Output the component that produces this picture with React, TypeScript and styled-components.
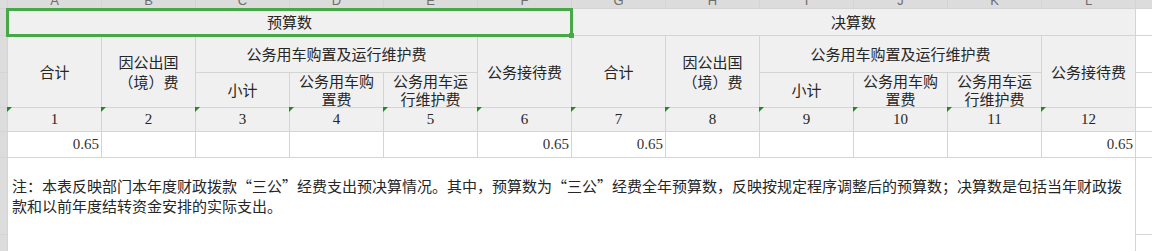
import React from 'react';
import styled, { createGlobalStyle, css } from 'styled-components';

const GlobalStyle = createGlobalStyle`
  html, body {
    margin: 0;
    padding: 0;
    background: #ffffff;
  }
  body {
    width: 1152px;
    height: 251px;
    overflow: hidden;
  }
`;

const CJK = `"Noto Sans CJK SC", "Liberation Sans", sans-serif`;
const NUM = `"Liberation Serif", "Noto Sans CJK SC", serif`;

const GREEN = '#46a846';

type Place = {
    $col: number;
    $row: number;
    $colSpan?: number;
    $rowSpan?: number;
};

const place = css<Place>`
    grid-column: ${({ $col, $colSpan }) => `${$col} / span ${$colSpan ?? 1}`};
    grid-row: ${({ $row, $rowSpan }) => `${$row} / span ${$rowSpan ?? 1}`};
`;

// grid gap doubles as the sheet's gridlines
const Sheet = styled.div`
    position: relative;
    display: grid;
    grid-template-columns: 7px repeat(12, 93px) 1fr;
    grid-template-rows: 8px 26px 36px 34px 23px 25px 76px 1fr;
    gap: 1px;
    width: 1152px;
    height: 251px;
    background: #d4d4d4;
    overflow: hidden;
`;

// column letters sit low in a header strip that is scrolled mostly out of view
const ColHead = styled.div<Place>`
    ${place};
    background: #dcdcdc;
    overflow: hidden;
    text-align: center;
    font-family: "Liberation Sans", sans-serif;
    font-size: 13px;
    color: #6e6e6e;

    span {
        display: block;
        line-height: 13px;
        margin-top: -6px;
    }
`;

const RowHead = styled.div<Place>`
    ${place};
    background: #dcdcdc;
`;

const HeadCell = styled.div<Place & { $lh?: number }>`
    ${place};
    display: flex;
    align-items: center;
    justify-content: center;
    overflow: hidden;
    background: #f0f0f0;
    text-align: center;
    font-family: ${CJK};
    font-size: 15px;
    line-height: ${({ $lh }) => $lh ?? 20}px;
    color: #262626;
`;

const IndexCell = styled.div<Place>`
    ${place};
    position: relative;
    display: flex;
    align-items: center;
    justify-content: center;
    background: #f0f0f0;
    font-family: ${NUM};
    font-size: 15px;
    color: #262626;

    &::before {
        content: '';
        position: absolute;
        top: -1px;
        left: -1px;
        width: 0;
        height: 0;
        border-top: 5px solid #1f8a1f;
        border-right: 5px solid transparent;
    }
`;

const ValueCell = styled.div<Place>`
    ${place};
    background: #ffffff;
    padding-right: 2px;
    text-align: right;
    font-family: ${NUM};
    font-size: 15px;
    line-height: 25px;
    color: #333333;
`;

const BlankCell = styled.div<Place>`
    ${place};
    background: #ffffff;
`;

const NoteCell = styled.div<Place>`
    ${place};
    background: #ffffff;
`;

const NoteText = styled.p`
    display: flex;
    align-items: center;
    height: 76px;
    margin: 0;
    padding: 0 4px;
    font-family: ${CJK};
    font-size: 15px;
    line-height: 20px;
    color: #262626;
`;

const Selection = styled.div`
    position: absolute;
    left: 6px;
    top: 8px;
    width: 567px;
    height: 29px;
    box-sizing: border-box;
    border: 3px solid ${GREEN};
    pointer-events: none;
`;

const Handle = styled.div`
    position: absolute;
    right: -4px;
    bottom: -4px;
    width: 5px;
    height: 5px;
    background: ${GREEN};
`;

const letters = ['A', 'B', 'C', 'D', 'E', 'F', 'G', 'H', 'I', 'J', 'K', 'L'];
const values: Record<number, string> = { 0: '0.65', 5: '0.65', 6: '0.65', 11: '0.65' };

const groups = [
    { title: '预算数', start: 2 },
    { title: '决算数', start: 8 },
];

const App = () => {
    return (
        <>
            <GlobalStyle />
            <Sheet>
                <ColHead $col={1} $row={1} />
                {letters.map((l, i) => (
                    <ColHead key={l} $col={i + 2} $row={1}>
                        <span>{l}</span>
                    </ColHead>
                ))}
                <ColHead $col={14} $row={1} />

                {[2, 3, 4, 5, 6, 7, 8].map((r) => (
                    <RowHead key={r} $col={1} $row={r} />
                ))}

                {groups.map(({ title, start }) => (
                    <React.Fragment key={title}>
                        <HeadCell $col={start} $row={2} $colSpan={6}>{title}</HeadCell>
                        <HeadCell $col={start} $row={3} $rowSpan={2}>合计</HeadCell>
                        <HeadCell $col={start + 1} $row={3} $rowSpan={2}>
                            因公出国<br />（境）费
                        </HeadCell>
                        <HeadCell $col={start + 2} $row={3} $colSpan={3}>公务用车购置及运行维护费</HeadCell>
                        <HeadCell $col={start + 2} $row={4}>小计</HeadCell>
                        <HeadCell $col={start + 3} $row={4} $lh={18}>
                            公务用车购<br />置费
                        </HeadCell>
                        <HeadCell $col={start + 4} $row={4} $lh={18}>
                            公务用车运<br />行维护费
                        </HeadCell>
                        <HeadCell $col={start + 5} $row={3} $rowSpan={2}>公务接待费</HeadCell>
                    </React.Fragment>
                ))}

                {letters.map((l, i) => (
                    <IndexCell key={`n${l}`} $col={i + 2} $row={5}>{i + 1}</IndexCell>
                ))}

                {letters.map((l, i) => (
                    <ValueCell key={`v${l}`} $col={i + 2} $row={6}>{values[i] ?? ''}</ValueCell>
                ))}

                <NoteCell $col={2} $row={7} $colSpan={12} $rowSpan={2}>
                    <NoteText>
                        注：本表反映部门本年度财政拨款“三公”经费支出预决算情况。其中，预算数为“三公”经费全年预算数，反映按规定程序调整后的预算数；决算数是包括当年财政拨款和以前年度结转资金安排的实际支出。
                    </NoteText>
                </NoteCell>

                {[2, 3, 4, 5, 6, 7, 8].map((r) => (
                    <BlankCell key={`m${r}`} $col={14} $row={r} />
                ))}

                <Selection>
                    <Handle />
                </Selection>
            </Sheet>
        </>
    );
};

export default App;
